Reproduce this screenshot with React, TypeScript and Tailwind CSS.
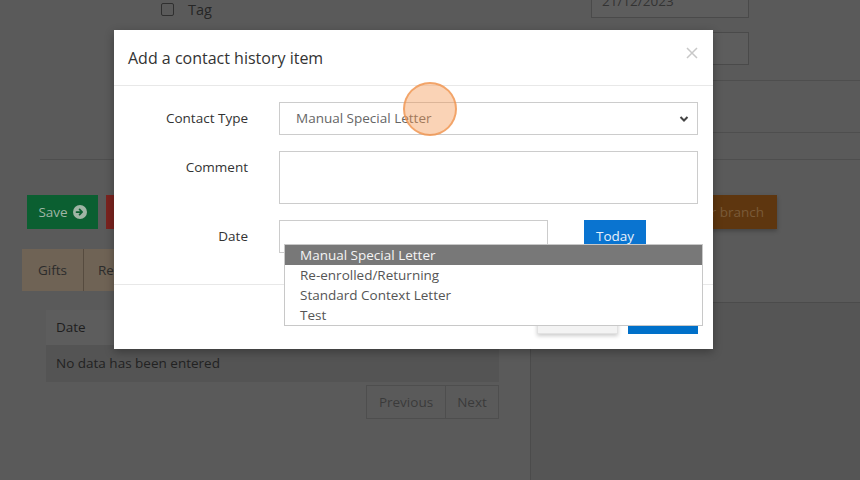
const contactTypes = [
  'Manual Special Letter',
  'Re-enrolled/Returning',
  'Standard Context Letter',
  'Test',
];

const ArrowCircle = () => (
  <svg width="14" height="14" viewBox="0 0 16 16">
    <circle cx="8" cy="8" r="8" fill="#9fb5a5" />
    <path d="M4 8h6M7.5 5l3 3-3 3" stroke="#0b5f31" strokeWidth="2" fill="none" strokeLinecap="round" strokeLinejoin="round" />
  </svg>
);

export default function App() {
  return (
    <div className="relative w-[860px] h-[480px] overflow-hidden bg-[#5a5a5a] font-['Open_Sans',sans-serif] text-[13.5px] text-[#262626]">
      {/* Page behind the dialog (already dimmed) */}
      <div className="h-[160px] flex ml-[40px] border-b border-[#4e4e4e]">
        <div className="w-[490px] pl-[121px] pt-[3px]">
          <div className="flex items-center gap-[14px]">
            <span className="w-[13px] h-[13px] rounded-[2px] border border-[#2f2f2f]" />
            <span className="text-[14.5px] leading-[13px]">Tag</span>
          </div>
        </div>
        <div className="flex-1">
          <div className="ml-[61px] w-[158px] h-[33px] -mt-[15px] border border-[#4a4a4a] bg-[#5d5d5d] pl-[10px] flex items-center text-[#333]">21/12/2023</div>
          <div className="ml-[61px] mt-[14px] w-[158px] h-[33px] border border-[#4a4a4a] bg-[#5d5d5d]" />
          <div className="mt-[15px] h-[53px] border-t border-b border-[#4e4e4e]" />
        </div>
      </div>

      <div className="mt-[35px] h-[34px] flex justify-between pl-[27px] pr-[83px]">
        <div className="flex gap-[8px]">
          <button className="w-[71px] h-[34px] bg-[#0b5f31] text-[#9fb5a5] flex items-center justify-center gap-[5px]">
            Save <ArrowCircle />
          </button>
          <button className="w-[90px] h-[34px] bg-[#7a231f]" />
        </div>
        <button className="w-[170px] h-[34px] bg-[#5e360f] text-[#7a5a38] flex items-center justify-end pr-[13px] shadow-[0_2px_4px_rgba(0,0,0,0.25)]">
          Transfer branch
        </button>
      </div>

      <div className="mt-[20px] ml-[22px] flex h-[42px]">
        <div className="w-[62px] bg-[#6f6355] border-r border-[#564b3f] flex items-center justify-center text-[#2c2c2c]">Gifts</div>
        <div className="w-[80px] bg-[#6f6355] flex items-center pl-[14px] text-[#2c2c2c]">Relationships</div>
      </div>

      <div className="flex">
        <div className="w-[530px] pt-[19px] pl-[46px]">
          <div className="w-[453px]">
            <div className="h-[35px] bg-[#5d5d5d] pl-[10px] flex items-center text-[#1e1e1e]">Date</div>
            <div className="h-[37px] bg-[#545454] pl-[10px] flex items-center text-[#222]">No data has been entered</div>
            <div className="mt-[3px] flex justify-end">
              <div className="w-[80px] h-[34px] border border-[#4e4e4e] flex items-center justify-center text-[#3a3a3a]">Previous</div>
              <div className="w-[53px] h-[34px] border border-l-0 border-[#4e4e4e] flex items-center justify-center text-[#3a3a3a]">Next</div>
            </div>
          </div>
        </div>
        <div className="flex-1 mt-[11px] h-[200px] border-t border-l border-[#4b4b4b] bg-[#555]" />
      </div>

      {/* Dialog */}
      <div className="absolute left-[114px] top-[30px] w-[599px] bg-white shadow-[0_3px_9px_rgba(0,0,0,0.3)]">
        <div className="h-[56px] pl-[14px] pr-[15px] flex items-center justify-between border-b border-[#e8e8e8]">
          <h4 className="text-[16px] text-[#333]">Add a contact history item</h4>
          <svg width="12" height="12" viewBox="0 0 12 12" className="-mt-[9px]">
            <path d="M1 1l10 10M11 1L1 11" stroke="#c8c8c8" strokeWidth="1.5" />
          </svg>
        </div>

        <div className="pt-[16px] pb-[31px] pr-[15px] grid grid-cols-[134px_1fr] gap-x-[31px] gap-y-[16px] text-[#333]">
          <div className="h-[33px] flex items-center justify-end">Contact Type</div>
          <div className="h-[33px] border border-[#ccc] pl-[16px] pr-[8px] flex items-center justify-between text-[#666]">
            <span>Manual Special Letter</span>
            <svg width="10" height="8" viewBox="0 0 10 8">
              <path d="M1.5 2l3.5 3.5L8.5 2" stroke="#444" strokeWidth="2" fill="none" />
            </svg>
          </div>

          <div className="h-[33px] flex items-center justify-end">Comment</div>
          <div className="h-[53px] border border-[#ccc]" />

          <div className="h-[33px] flex items-center justify-end">Date</div>
          <div className="flex gap-[36px]">
            <div className="w-[269px] h-[33px] border border-[#ccc]" />
            <button className="w-[62px] h-[33px] bg-[#0a74d0] text-[#e8f1fb]">Today</button>
          </div>
        </div>

        <div className="h-[65px] border-t border-[#e8e8e8] flex items-center justify-end gap-[10px] pr-[15px]">
          <button className="w-[81px] h-[33px] bg-[#f3f3f3] border border-[#e2e2e2] shadow-[0_2px_4px_rgba(0,0,0,0.2)] text-[#333]">Cancel</button>
          <button className="w-[70px] h-[33px] bg-[#0070c9] text-white">Save</button>
        </div>
      </div>

      {/* Open select list */}
      <ul className="absolute left-[284px] top-[244px] w-[419px] bg-white border border-[#c8c8c8]">
        {contactTypes.map((t, i) => (
          <li
            key={t}
            className={`h-[20px] leading-[20px] pl-[15px] ${i === 0 ? 'bg-[#787878] text-[#f4f4f4]' : 'text-[#555]'}`}
          >
            {t}
          </li>
        ))}
      </ul>

      {/* Click highlight */}
      <div className="absolute left-[403px] top-[82px] w-[54px] h-[54px] rounded-full bg-[rgba(244,150,80,0.42)] border-2 border-[rgba(240,150,80,0.75)]" />
    </div>
  );
}
